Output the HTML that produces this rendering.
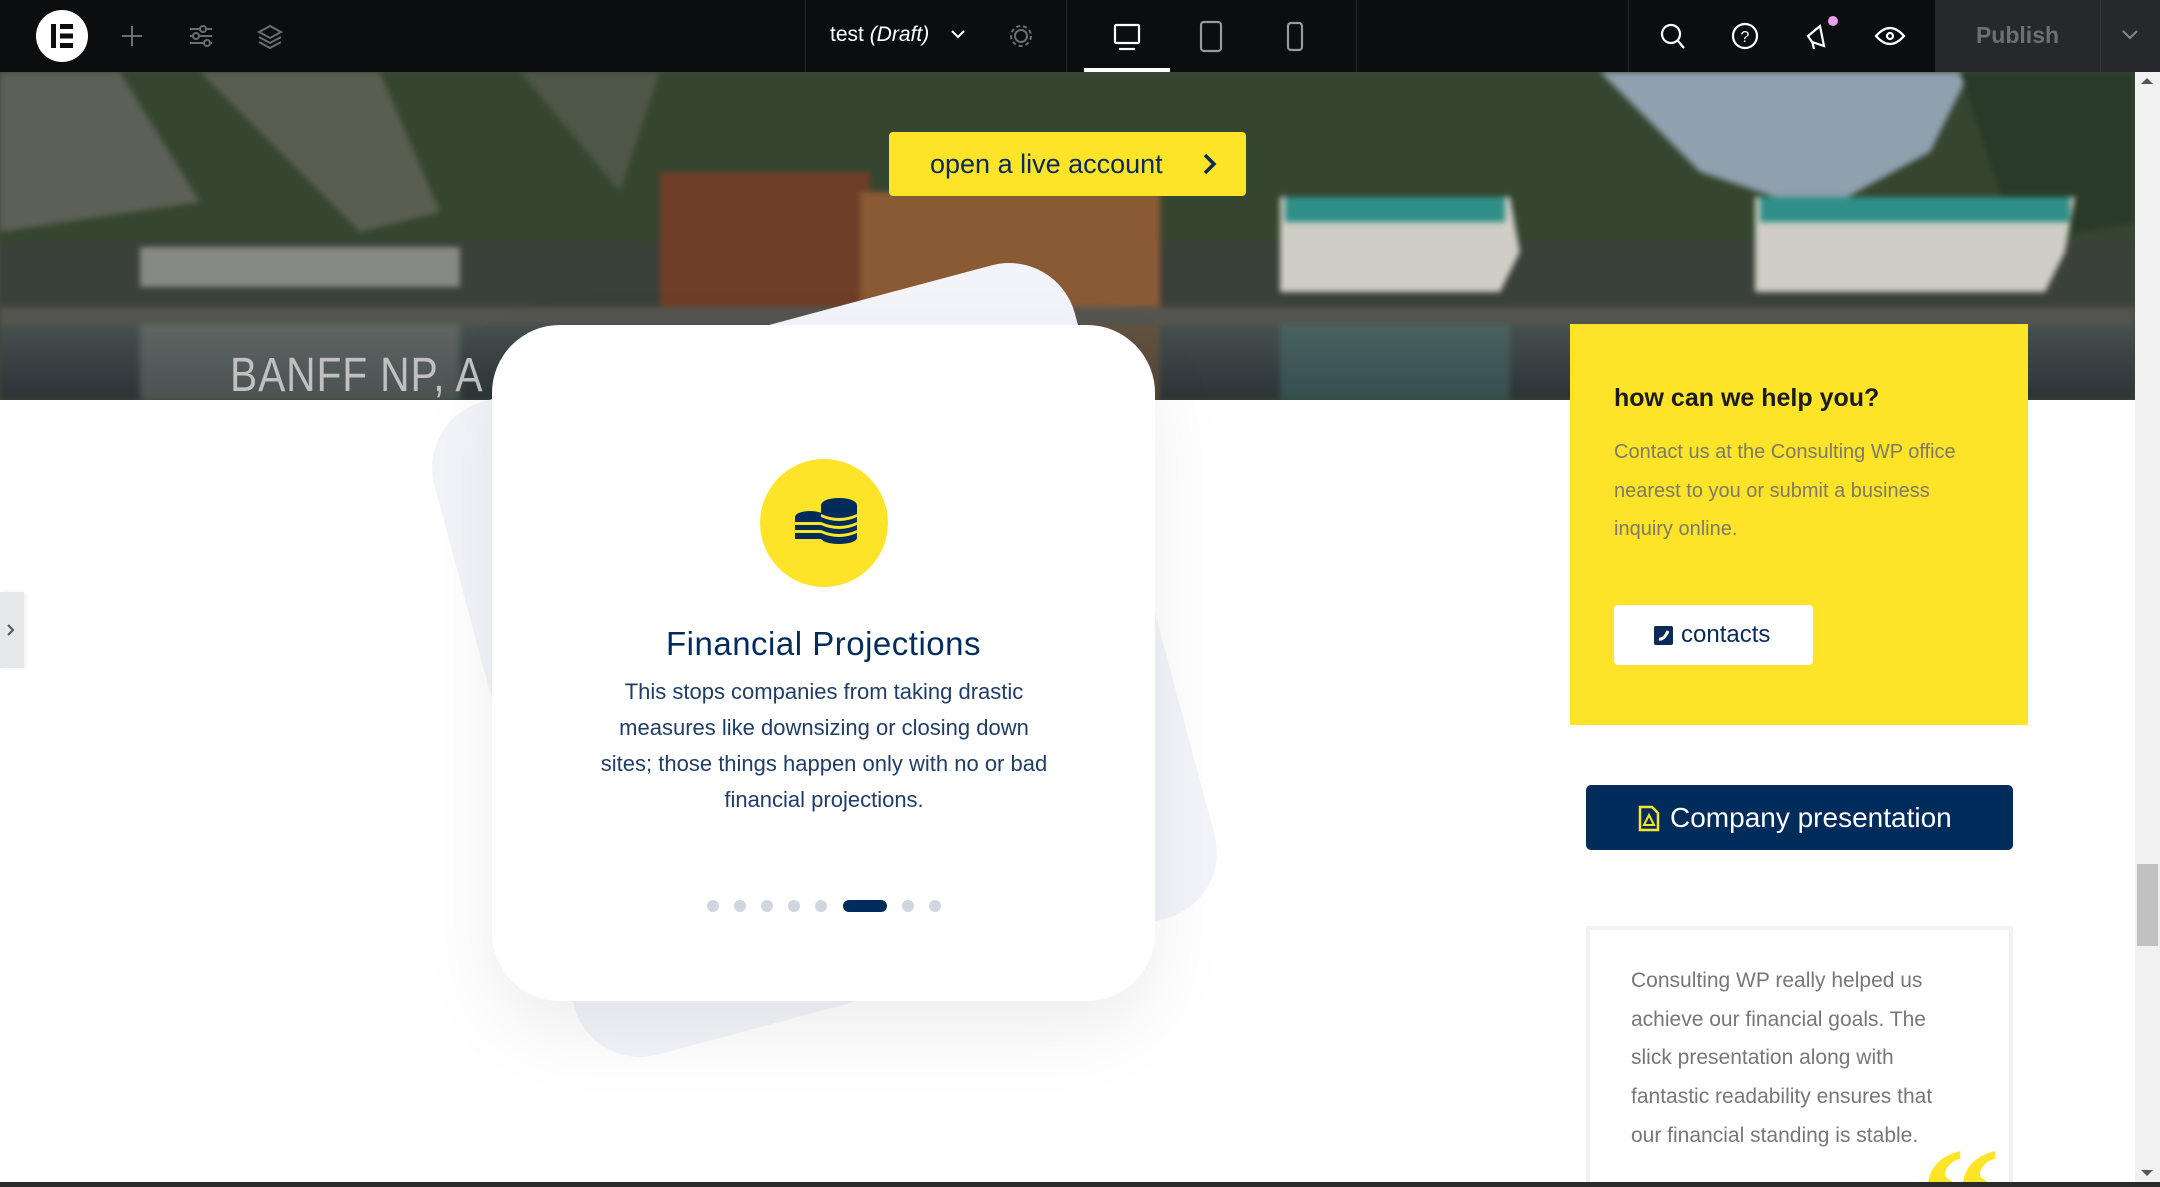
<!DOCTYPE html>
<html style="width:2160px;height:1187px;overflow:hidden"><head><meta charset="utf-8"><style>
*{margin:0;padding:0;box-sizing:border-box}
body{width:2160px;height:1187px;overflow:hidden;background:#fff;position:relative;font-family:"Liberation Sans",sans-serif}
.abs{position:absolute}
#top{left:0;top:0;width:2160px;height:72px;background:#0c0d0f}
.sep{position:absolute;top:0;width:1px;height:72px;background:#26282b}
#hero{left:0;top:72px;width:2135px;height:328px;overflow:hidden;background:#3b4a35}
</style></head><body>

<div id="top" class="abs">
  <svg class="abs" style="left:0;top:0" width="2160" height="72">
    <circle cx="62" cy="36" r="26" fill="#fff"/>
    <rect x="51" y="24" width="5" height="24" fill="#0c0d0f"/>
    <rect x="60" y="24" width="13" height="5" fill="#0c0d0f"/>
    <rect x="60" y="33.5" width="13" height="5" fill="#0c0d0f"/>
    <rect x="60" y="43" width="13" height="5" fill="#0c0d0f"/>
    <g stroke="#6b6d70" stroke-width="2" fill="none">
      <path d="M132 26v20M122 36h20"/>
      <path d="M190 29h22M190 36h22M190 43h22"/>
      <circle cx="203" cy="29" r="3" fill="#0c0d0f"/><circle cx="196" cy="36" r="3" fill="#0c0d0f"/><circle cx="207" cy="43" r="3" fill="#0c0d0f"/>
      <path d="M270 26l11 6-11 6-11-6z"/><path d="M259 37l11 6 11-6"/><path d="M259 42l11 6 11-6"/>
      <circle cx="1021" cy="36" r="6"/><circle cx="1021" cy="36" r="10" stroke-dasharray="4 3"/>
    </g>
    <path d="M952 31l6 6 6-6" stroke="#fff" stroke-width="2" fill="none"/>
    <g stroke="#fff" stroke-width="2.2" fill="none">
      <rect x="1115" y="25" width="24" height="18" rx="1"/><path d="M1119 49h16"/>
      <rect x="1201" y="22" width="20" height="29" rx="3" stroke="#9a9a9a"/>
      <rect x="1288" y="23" width="14" height="27" rx="3" stroke="#9a9a9a"/>
      <circle cx="1671" cy="34" r="9"/><path d="M1678 41l6 7"/>
      <circle cx="1745" cy="36" r="12"/>
      <path d="M1808 36l12-10 4 20-12-4zM1812 41l2 8"/>
      <path d="M1876 36q14-16 28 0q-14 16-28 0z"/><circle cx="1890" cy="36" r="3"/>
    </g>
    <text x="1745" y="42" font-size="16" fill="#fff" text-anchor="middle" font-family="Liberation Sans">?</text>
    <circle cx="1833" cy="21" r="5" fill="#e8a0ef"/>
    <rect x="1084" y="68" width="86" height="4" fill="#fff"/>
    <rect x="1935" y="0" width="225" height="72" fill="#27282b"/>
    <rect x="2100" y="0" width="1" height="72" fill="#3a3b3e"/>
    <path d="M2123 31l7 7 7-7" stroke="#8a8a8a" stroke-width="2" fill="none"/>
  </svg>
  <div class="sep" style="left:805px"></div><div class="sep" style="left:1066px"></div>
  <div class="sep" style="left:1356px"></div><div class="sep" style="left:1628px"></div>
  <div class="abs" style="left:830px;top:23px;color:#fff;font-size:21px">test <i>(Draft)</i></div>
  <div class="abs" style="left:1935px;top:22px;width:165px;text-align:center;color:#6f6f6f;font-size:23px;font-weight:bold">Publish</div>
</div>

<div id="hero" class="abs">
  <svg width="2135" height="328" class="abs" style="left:0;top:0;filter:blur(3px)">
    <defs><linearGradient id="w" x1="0" y1="0" x2="0" y2="1"><stop offset="0" stop-color="#46504f"/><stop offset="1" stop-color="#283134"/></linearGradient></defs>
    <rect x="-10" y="-10" width="2160" height="200" fill="#35452f"/>
    <path d="M0 0h120l80 130-200 30z" fill="#5c6056"/>
    <path d="M200 0h180l60 140-80 20z" fill="#6a6a60" opacity=".7"/>
    <path d="M520 0h140l-40 120z" fill="#5e6258" opacity=".6"/>
    <path d="M1600 0h370l-40 80-110 60-120-40z" fill="#8fa0ae"/>
    <path d="M1960 0h185v150l-130 20z" fill="#2a3a28"/>
    <rect x="0" y="170" width="2135" height="80" fill="#3a403a"/>
    <rect x="660" y="100" width="210" height="150" fill="#6e3e28"/>
    <rect x="860" y="120" width="300" height="130" fill="#8a5a35"/>
    <rect x="140" y="175" width="320" height="40" fill="#b9bbb6" opacity=".6"/>
    <path d="M1280 125h230l10 55-20 40h-220z" fill="#cfcdc4"/>
    <rect x="1285" y="125" width="220" height="25" fill="#2f8f88"/>
    <path d="M1755 125h320l-10 55-20 40h-290z" fill="#cfcdc4"/>
    <rect x="1760" y="125" width="310" height="25" fill="#2f8f88"/>
    <rect x="0" y="235" width="2135" height="18" fill="#54554e"/>
    <rect x="0" y="253" width="2135" height="80" fill="url(#w)"/>
    <rect x="860" y="253" width="300" height="80" fill="#7a5535" opacity=".55"/>
    <rect x="1280" y="253" width="230" height="80" fill="#4f8f88" opacity=".3"/>
    <rect x="140" y="253" width="320" height="80" fill="#8a8c88" opacity=".35"/>
  </svg>
  <div class="abs" style="left:230px;top:276px;color:#c0c0c0;font-size:48px;letter-spacing:1px;transform:scaleX(.85);transform-origin:left">BANFF NP, A</div>
</div>

<div class="abs" style="left:889px;top:132px;width:357px;height:64px;background:#fde428;border-radius:4px;color:#0a2a5a;font-size:27px;line-height:64px;padding-left:41px">open a live account
  <svg class="abs" style="left:312px;top:20px" width="18" height="24"><path d="M4 3l9 9-9 9" stroke="#0a2a5a" stroke-width="3.5" fill="none"/></svg></div>

<div class="abs" style="left:493px;top:322px;width:663px;height:676px;background:#f3f4fa;border-radius:68px;transform:rotate(-15deg)"></div>
<div class="abs" style="left:492px;top:325px;width:663px;height:676px;background:#fff;border-radius:68px;box-shadow:0 30px 80px rgba(0,0,0,.07)"></div>
<svg class="abs" style="left:760px;top:459px" width="128" height="128">
  <circle cx="64" cy="64" r="64" fill="#fde428"/>
  <g fill="#002c5c">
    <ellipse cx="50" cy="58" rx="15" ry="6"/><rect x="35" y="58" width="30" height="22"/>
    <rect x="35" y="63" width="30" height="3" fill="#fde428"/><rect x="35" y="71" width="30" height="3" fill="#fde428"/>
    <ellipse cx="79" cy="46" rx="18" ry="7"/><rect x="61" y="46" width="36" height="33"/><ellipse cx="79" cy="79" rx="18" ry="6"/>
    <path d="M61 55q18 8 36 0v3q-18 8-36 0z" fill="#fde428"/><path d="M61 63q18 8 36 0v3q-18 8-36 0z" fill="#fde428"/><path d="M61 71q18 8 36 0v3q-18 8-36 0z" fill="#fde428"/>
  </g>
</svg>
<div class="abs" style="left:492px;top:625px;width:663px;text-align:center;color:#002c5c;font-size:33px;letter-spacing:.5px">Financial Projections</div>
<div class="abs" style="left:594px;top:674px;width:460px;text-align:center;color:#1f3d66;font-size:22px;line-height:36px">This stops companies from taking drastic measures like downsizing or closing down sites; those things happen only with no or bad financial projections.</div>
<svg class="abs" style="left:700px;top:894px" width="250" height="24">
  <g fill="#cfd6e0"><circle cx="13" cy="12" r="6"/><circle cx="40" cy="12" r="6"/><circle cx="67" cy="12" r="6"/><circle cx="94" cy="12" r="6"/><circle cx="121" cy="12" r="6"/><circle cx="208" cy="12" r="6"/><circle cx="235" cy="12" r="6"/></g>
  <rect x="143" y="6" width="44" height="12" rx="6" fill="#002c5c"/>
</svg>

<div class="abs" style="left:1570px;top:324px;width:458px;height:401px;background:#fde428"></div>
<div class="abs" style="left:1614px;top:384px;font-size:25px;font-weight:bold;color:#1b1b1b">how can we help you?</div>
<div class="abs" style="left:1614px;top:433px;width:380px;font-size:20px;line-height:38.5px;color:#7d7a66">Contact us at the Consulting WP office nearest to you or submit a business inquiry online.</div>
<div class="abs" style="left:1614px;top:605px;width:199px;height:60px;background:#fff;border-radius:4px;color:#0a2a5a;font-size:24px;line-height:60px;padding-left:67px">contacts
  <svg class="abs" style="left:40px;top:21px" width="19" height="19"><rect width="19" height="19" rx="2" fill="#0a2a5a"/><path d="M5 13q5 1 9-8" stroke="#fff" stroke-width="3" fill="none"/></svg></div>
<div class="abs" style="left:1586px;top:785px;width:427px;height:65px;background:#002c5c;border-radius:5px;color:#fff;font-size:28px;line-height:65px;padding-left:84px">Company presentation
  <svg class="abs" style="left:52px;top:20px" width="22" height="27"><path d="M2 2h12l6 6v17H2z" stroke="#fde428" stroke-width="2.5" fill="none"/><path d="M6 20l5-10 5 10z" stroke="#fde428" stroke-width="2" fill="none"/></svg></div>
<div class="abs" style="left:1586px;top:926px;width:427px;height:256px;border:4px solid #f1f1f1;border-bottom:none"></div>
<div class="abs" style="left:1631px;top:962px;width:335px;font-size:21px;line-height:38.7px;color:#777">Consulting WP really helped us achieve our financial goals. The slick presentation along with fantastic readability ensures that our financial standing is stable.</div>
<div class="abs" style="left:1912px;top:1128px;width:100px;height:54px;overflow:hidden"><div style="font-family:'Liberation Serif',serif;font-size:170px;font-weight:bold;font-style:italic;color:#fde428;line-height:1;margin-top:-6px">“</div></div>

<div class="abs" style="left:2135px;top:72px;width:25px;height:1110px;background:#f1f1f1"></div>
<div class="abs" style="left:2137px;top:864px;width:21px;height:82px;background:#c1c1c1"></div>
<div class="abs" style="left:2141px;top:78px;width:0;height:0;border:6px solid transparent;border-bottom-color:#555;border-top:none"></div>
<div class="abs" style="left:2141px;top:1170px;width:0;height:0;border:6px solid transparent;border-top-color:#555;border-bottom:none"></div>
<div class="abs" style="left:0;top:1182px;width:2160px;height:5px;background:#2b2b2b"></div>
<div class="abs" style="left:0;top:592px;width:24px;height:76px;background:#e6e7e9;box-shadow:2px 0 4px rgba(0,0,0,.06)"></div>
<svg class="abs" style="left:6px;top:623px" width="10" height="14"><path d="M2 2l5 5-5 5" stroke="#555" stroke-width="2" fill="none"/></svg>
</body></html>
